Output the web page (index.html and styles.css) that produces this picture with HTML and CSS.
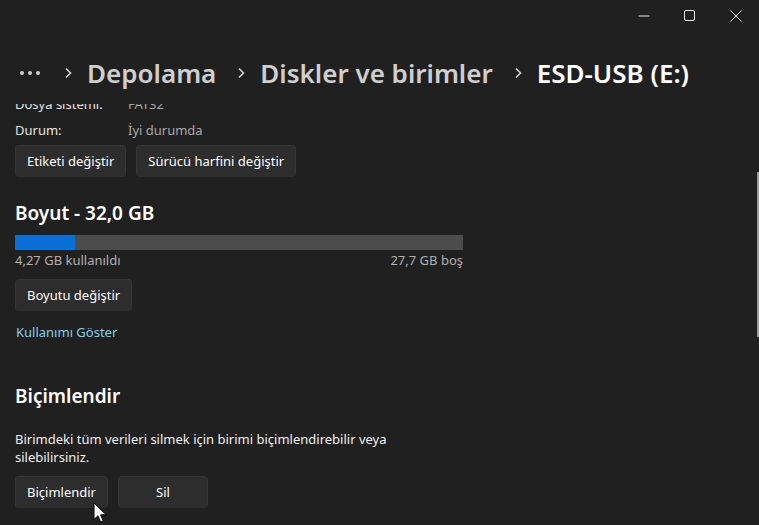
FILE: index.html
```html
<!DOCTYPE html>
<html lang="tr">
<head>
    <meta charset="UTF-8">
    <meta name="viewport" content="width=device-width, initial-scale=1.0">
    <title>ESD-USB (E:)</title>
    <link rel="stylesheet" href="styles.css">
</head>
<body>
    <div class="window">
        <div class="titlebar">
            <span class="caption-btn">
                <svg width="12" height="12" viewBox="0 0 12 12"><path d="M0.5 6h11" stroke="#e8e8e8" stroke-width="1"/></svg>
            </span>
            <span class="caption-btn">
                <svg width="12" height="12" viewBox="0 0 12 12"><rect x="0.5" y="0.5" width="10" height="10" rx="1.5" fill="none" stroke="#e8e8e8" stroke-width="1"/></svg>
            </span>
            <span class="caption-btn">
                <svg width="12" height="12" viewBox="0 0 12 12"><path d="M0.5 0.5l11 11M11.5 0.5l-11 11" stroke="#e8e8e8" stroke-width="1"/></svg>
            </span>
        </div>

        <div class="breadcrumb">
            <span class="more">
                <svg width="24" height="6" viewBox="0 0 24 6"><circle cx="3" cy="3" r="2" fill="#d0d0d0"/><circle cx="11" cy="3" r="2" fill="#d0d0d0"/><circle cx="19" cy="3" r="2" fill="#d0d0d0"/></svg>
            </span>
            <span class="chev"><svg width="8" height="12" viewBox="0 0 8 12"><path d="M2 1.5l4.5 4.5L2 10.5" fill="none" stroke="#cfcfcf" stroke-width="1.6"/></svg></span>
            <span class="crumb">Depolama</span>
            <span class="chev"><svg width="8" height="12" viewBox="0 0 8 12"><path d="M2 1.5l4.5 4.5L2 10.5" fill="none" stroke="#cfcfcf" stroke-width="1.6"/></svg></span>
            <span class="crumb">Diskler ve birimler</span>
            <span class="chev"><svg width="8" height="12" viewBox="0 0 8 12"><path d="M2 1.5l4.5 4.5L2 10.5" fill="none" stroke="#cfcfcf" stroke-width="1.6"/></svg></span>
            <span class="crumb current">ESD-USB (E:)</span>
        </div>

        <div class="scroll">
            <div class="content">
                <div class="props">
                    <span class="prop-label">Dosya sistemi:</span>
                    <span class="prop-value">FAT32</span>
                    <span class="prop-label">Durum:</span>
                    <span class="prop-value">İyi durumda</span>
                </div>
                <div class="btn-row first">
                    <button class="btn">Etiketi değiştir</button>
                    <button class="btn">Sürücü harfini değiştir</button>
                </div>

                <h2 class="section-title size">Boyut - 32,0 GB</h2>
                <div class="usage-bar">
                    <div class="usage-fill" style="width: 13.4%"></div>
                </div>
                <div class="usage-labels">
                    <span>4,27 GB kullanıldı</span>
                    <span>27,7 GB boş</span>
                </div>
                <div class="btn-row resize">
                    <button class="btn">Boyutu değiştir</button>
                </div>
                <a class="link" href="#">Kullanımı Göster</a>

                <h2 class="section-title format">Biçimlendir</h2>
                <p class="desc">Birimdeki tüm verileri silmek için birimi biçimlendirebilir veya silebilirsiniz.</p>
                <div class="btn-row last">
                    <button class="btn wide">Biçimlendir</button>
                    <button class="btn wide">Sil</button>
                </div>
            </div>
            <div class="scrollbar"></div>
        </div>

        <svg class="cursor" width="14" height="22" viewBox="0 0 14 22">
            <path d="M1 1v16.5l4-3.8 2.6 6.3 2.6-1.1-2.6-6.1h5.6z" fill="#ffffff" stroke="#000000" stroke-width="1"/>
        </svg>
    </div>
</body>
</html>
```

FILE: styles.css
```css
* {
    box-sizing: border-box;
}
html, body {
    margin: 0;
    height: 100%;
    background: #202020;
}
body {
    font-family: 'Noto Sans', 'Open Sans', sans-serif;
    color: #ffffff;
    overflow: hidden;
}
.window {
    position: relative;
    height: 100vh;
    display: flex;
    flex-direction: column;
}
.titlebar {
    height: 32px;
    display: flex;
    justify-content: flex-end;
    align-items: center;
}
.caption-btn {
    width: 46px;
    height: 30px;
    display: flex;
    align-items: center;
    justify-content: center;
}
.breadcrumb {
    height: 72px;
    display: flex;
    align-items: center;
    padding: 10px 0 0 19px;
    font-size: 26px;
    font-weight: 600;
}
.more {
    display: flex;
    align-items: center;
    width: 24px;
    margin-right: 21px;
}
.chev {
    display: flex;
    align-items: center;
    margin-right: 15px;
}
.crumb {
    color: #cfcfcf;
    margin-right: 21px;
}
.crumb.current {
    color: #ffffff;
}
.scroll {
    position: relative;
    flex: 1;
    overflow: hidden;
}
.content {
    margin-top: -10px;
    padding-left: 15px;
    font-size: 13px;
}
.props {
    display: grid;
    grid-template-columns: 113px auto;
    row-gap: 6px;
    line-height: 20px;
}
.prop-label {
    color: #e4e4e4;
}
.prop-value {
    color: #a8a8a8;
}
.btn-row {
    display: flex;
    gap: 10px;
}
.btn-row.first {
    margin-top: 5px;
}
.btn-row.resize {
    margin-top: 9px;
}
.btn-row.last {
    margin-top: 10px;
}
.btn {
    height: 32px;
    padding: 0 11px;
    background: #2d2d2d;
    border: 1px solid #353535;
    border-bottom-color: #2f2f2f;
    border-radius: 4px;
    color: #ffffff;
    font-family: inherit;
    font-size: 13px;
}
.btn.wide {
    min-width: 90px;
}
.section-title {
    margin: 0;
    font-size: 19px;
    font-weight: 600;
    line-height: 28px;
}
.section-title.size {
    margin-top: 22px;
}
.section-title.format {
    margin-top: 40px;
}
.usage-bar {
    margin-top: 8px;
    width: 448px;
    height: 15px;
    background: #4c4c4c;
}
.usage-fill {
    height: 100%;
    background: #0a6fd4;
}
.usage-labels {
    width: 448px;
    display: flex;
    justify-content: space-between;
    line-height: 20px;
    color: #b0b0b0;
}
.link {
    display: inline-block;
    margin-top: 11px;
    line-height: 20px;
    color: #7fd0ee;
    text-decoration: none;
    padding-left: 1px;
}
.desc {
    margin: 20px 0 0;
    width: 400px;
    line-height: 18px;
    color: #f0f0f0;
}
.scrollbar {
    position: absolute;
    right: 0;
    top: 68px;
    width: 2px;
    height: 165px;
    background: #9c9c9c;
}
.cursor {
    position: absolute;
    left: 93px;
    top: 502px;
}
```
